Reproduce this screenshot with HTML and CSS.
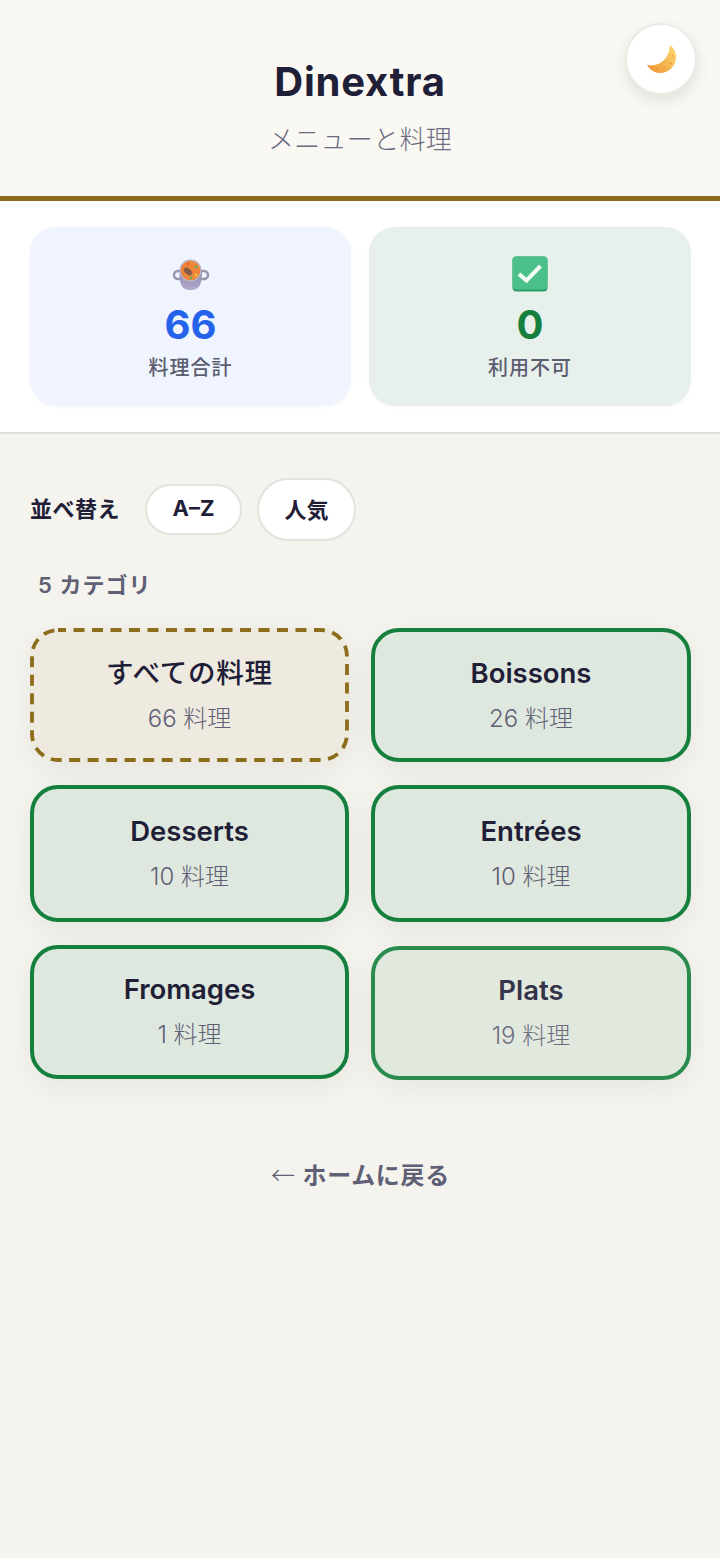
FILE: index.html
```html
<!DOCTYPE html>
<html lang="ja">
<head>
    <meta charset="UTF-8">
    <meta name="viewport" content="width=device-width, initial-scale=1.0">
    <title>Dinextra</title>
    <link rel="stylesheet" href="styles.css">
</head>
<body>
    <div class="header">
        <h1>Dinextra</h1>
        <p>メニューと料理</p>
        <button class="theme-btn" type="button" aria-label="theme">
            <svg width="32" height="32" viewBox="0 0 32 32">
                <defs>
                    <linearGradient id="moonFill" x1="0.9" y1="0.2" x2="0.1" y2="0.8">
                        <stop offset="0" stop-color="#fcd06a"/>
                        <stop offset="1" stop-color="#f29a36"/>
                    </linearGradient>
                </defs>
                <path d="M25 2C29 5 31.500 10 31 15.500C30.300 23.500 23.500 30 15.500 30C9.500 30 4.500 26.500 2 21.500C11 25 24.500 18 25 2Z" fill="url(#moonFill)"/>
                <path d="M24 20c1 .8 2 .8 2.800 0M11 26c1-.6 2-.4 2.800.6M27 12c.7.400 1 1 1 1.800M18 25c.5-.8 1.300-1 2-.8" stroke="#de8f2e" stroke-width="0.900" fill="none"/>
            </svg>
        </button>
    </div>

    <div class="stats">
        <div class="stat-card stat-total">
            <svg class="stat-icon" width="38" height="36" viewBox="0 0 38 36">
                <defs>
                    <linearGradient id="potFill" x1="0" y1="0" x2="0" y2="1">
                        <stop offset="0" stop-color="#8d88a6"/>
                        <stop offset="1" stop-color="#b3aad0"/>
                    </linearGradient>
                </defs>
                <path d="M8 15H6a4 4 0 0 0 0 8h3M29 15h3a4 4 0 0 1 0 8h-3" stroke="#9794ab" stroke-width="2.400" fill="none"/>
                <path d="M7.500 14c0 12 .5 20 11 20S30 26 30 14z" fill="url(#potFill)"/>
                <circle cx="18.500" cy="14.500" r="11" fill="#b9b4cc"/>
                <circle cx="18.500" cy="14.500" r="9.800" fill="#f0853a"/>
                <ellipse cx="16" cy="15.500" rx="4.800" ry="2.900" fill="#8a5a48" transform="rotate(40 16 15.500)"/>
                <circle cx="24" cy="11" r="1.600" fill="#6fae5a"/>
                <circle cx="24" cy="19" r="1.500" fill="#f6c445"/>
                <circle cx="19" cy="22" r="1.400" fill="#6fae5a"/>
                <circle cx="16" cy="8" r="1" fill="#d9482b"/>
            </svg>
            <div class="stat-num num-blue">66</div>
            <div class="stat-label">料理合計</div>
        </div>
        <div class="stat-card stat-off">
            <svg class="stat-icon" width="38" height="36" viewBox="0 0 38 36">
                <rect x="1.500" y="0.500" width="35" height="35" rx="4" fill="#2f9e68"/>
                <rect x="1.500" y="0.500" width="35" height="33" rx="4" fill="#4cc08a"/>
                <path d="M8 18l7.500 6.500L29.500 10" stroke="#f2fbf6" stroke-width="4" fill="none"/>
            </svg>
            <div class="stat-num num-green">0</div>
            <div class="stat-label">利用不可</div>
        </div>
    </div>

    <div class="main">
        <div class="sort-row">
            <span class="sort-label">並べ替え</span>
            <button class="pill pill-az" type="button">A–Z</button>
            <button class="pill pill-pop" type="button">人気</button>
        </div>

        <div class="cat-count">5 カテゴリ</div>

        <div class="cat-grid">
            <a class="cat-card cat-all" href="#">
                <svg class="dash-border" width="319" height="134" viewBox="0 0 319 134">
                    <rect x="2" y="2" width="315" height="130" rx="26"/>
                </svg>
                <h3>すべての料理</h3>
                <span>66 料理</span>
            </a>
            <a class="cat-card" href="#"><h3>Boissons</h3><span>26 料理</span></a>
            <a class="cat-card" href="#"><h3>Desserts</h3><span>10 料理</span></a>
            <a class="cat-card" href="#"><h3>Entrées</h3><span>10 料理</span></a>
            <a class="cat-card" href="#"><h3>Fromages</h3><span>1 料理</span></a>
            <a class="cat-card cat-fading" href="#"><h3>Plats</h3><span>19 料理</span></a>
        </div>

        <a class="back-link" href="#"><span class="back-arrow">←</span> ホームに戻る</a>
    </div>
</body>
</html>
```

FILE: styles.css
```css
* {
    margin: 0;
    padding: 0;
    box-sizing: border-box;
}

body {
    font-family: 'Inter', 'Noto Sans CJK JP', sans-serif;
    background: #f4f3ed;
    color: #1f2037;
    min-height: 100vh;
}

.header {
    position: relative;
    height: 201px;
    padding-top: 57px;
    background: #faf8f3;
    border-bottom: 5px solid #8b6d1c;
    text-align: center;
}

.header h1 {
    font-size: 40px;
    line-height: 50px;
    font-weight: 700;
    letter-spacing: 0.8px;
}

.header p {
    margin-top: 16px;
    font-size: 26px;
    line-height: 34px;
    font-weight: 300;
    letter-spacing: 0.3px;
    color: #6b6b80;
}

.theme-btn {
    position: absolute;
    top: 23px;
    right: 23px;
    width: 72px;
    height: 72px;
    display: flex;
    align-items: center;
    justify-content: center;
    background: #fff;
    border: 2px solid #eceae5;
    border-radius: 50%;
    box-shadow: 0 6px 16px rgba(0,0,0,0.1);
}

.stats {
    display: grid;
    grid-template-columns: 321px 322px;
    gap: 18px;
    height: 233px;
    padding: 26px 29px 26px 30px;
    background: #fff;
    border-bottom: 2px solid #ddd;
}

.stat-card {
    display: flex;
    flex-direction: column;
    align-items: center;
    padding-top: 29px;
    border-radius: 26px;
    box-shadow: 0 1px 4px rgba(0,0,0,0.03);
}

.stat-total {
    background: #eff4ff;
}

.stat-off {
    background: #e7f0ea;
}

.stat-num {
    margin-top: 8px;
    font-size: 40px;
    line-height: 50px;
    font-weight: 700;
}

.num-blue {
    color: #2563eb;
}

.num-green {
    color: #15803d;
}

.stat-label {
    margin-top: 4px;
    font-size: 20px;
    line-height: 28px;
    font-weight: 500;
    letter-spacing: 1px;
    color: #5c5c70;
}

.main {
    padding: 44px 29px 0 30px;
}

.sort-row {
    display: flex;
    align-items: center;
    gap: 15px;
}

.sort-label {
    margin-right: 10px;
    padding-bottom: 5px;
    font-size: 22px;
    font-weight: 600;
    letter-spacing: 0.5px;
}

.pill {
    padding-bottom: 4px;
    font-family: inherit;
    font-size: 22px;
    font-weight: 700;
    color: #1f2037;
    background: #fff;
    border: 2px solid #e4e2dd;
    border-radius: 32px;
}

.pill-az {
    width: 97px;
    height: 51px;
}

.pill-pop {
    width: 99px;
    height: 63px;
    font-weight: 600;
}

.cat-count {
    margin-top: 28px;
    padding-left: 8px;
    font-size: 22px;
    line-height: 32px;
    font-weight: 600;
    letter-spacing: 1px;
    color: #5f5f75;
}

.cat-grid {
    display: grid;
    grid-template-columns: 319px 320px;
    grid-template-rows: 134px 136.5px 134px;
    gap: 23px 22px;
    margin-top: 27px;
}

.cat-card {
    position: relative;
    display: flex;
    flex-direction: column;
    align-items: center;
    justify-content: center;
    background: #dfe8de;
    border: 4px solid #15803d;
    border-radius: 28px;
    box-shadow: 0 8px 32px rgba(0,0,0,0.06);
    color: inherit;
    text-decoration: none;
}

.cat-card h3 {
    font-size: 27.5px;
    line-height: 36px;
    font-weight: 600;
}

.cat-card span {
    margin-top: 11px;
    font-size: 24px;
    line-height: 34px;
    font-weight: 300;
    color: #5f5f75;
}

.cat-all {
    background: #eeeae0;
    border-color: transparent;
}

.cat-all h3 {
    font-weight: 500;
    letter-spacing: 0.8px;
}

.dash-border {
    position: absolute;
    top: -4px;
    left: -4px;
}

.dash-border rect {
    fill: none;
    stroke: #8b6d1c;
    stroke-width: 3.8;
    stroke-dasharray: 11 7.5;
    stroke-dashoffset: 3;
}

.cat-fading {
    opacity: 0.9;
    transform: translateY(1px);
}

.back-link {
    display: block;
    margin-top: 77px;
    text-align: center;
    font-size: 24px;
    line-height: 36px;
    font-weight: 600;
    letter-spacing: 0.7px;
    color: #5f5f75;
    text-decoration: none;
}

.back-arrow {
    font-family: 'Noto Sans CJK JP', sans-serif;
    font-weight: 300;
}
```
